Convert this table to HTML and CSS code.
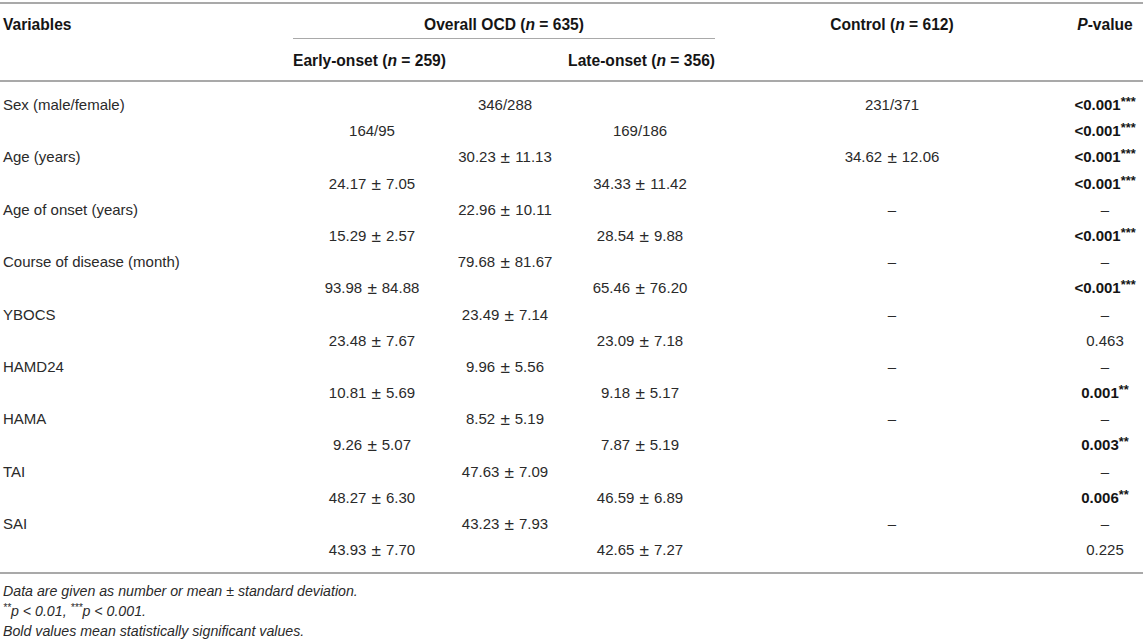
FILE: index.html
```html
<!DOCTYPE html>
<html lang="en">
<head>
<meta charset="utf-8">
<title>Table</title>
<link rel="stylesheet" href="styles.css">
</head>
<body>
<div class="page">
  <div class="head">
    <div class="h-var">Variables</div>
    <div class="h-overall">Overall OCD (<i>n</i> = 635)</div>
    <div class="h-control">Control (<i>n</i> = 612)</div>
    <div class="h-p"><i>P</i>-value</div>
    <div class="h-sub">
      <span>Early-onset (<i>n</i> = 259)</span>
      <span>Late-onset (<i>n</i> = 356)</span>
    </div>
  </div>

  <div class="body">
    <div class="c var">Sex (male/female)</div><div class="c"></div><div class="c">346/288</div><div class="c"></div><div class="c ctl">231/371</div><div class="c p"><b>&lt;0.001<sup>***</sup></b></div>
    <div class="c var"></div><div class="c">164/95</div><div class="c"></div><div class="c">169/186</div><div class="c ctl"></div><div class="c p"><b>&lt;0.001<sup>***</sup></b></div>

    <div class="c var">Age (years)</div><div class="c"></div><div class="c">30.23 <span class="pm">±</span> 11.13</div><div class="c"></div><div class="c ctl">34.62 <span class="pm">±</span> 12.06</div><div class="c p"><b>&lt;0.001<sup>***</sup></b></div>
    <div class="c var"></div><div class="c">24.17 <span class="pm">±</span> 7.05</div><div class="c"></div><div class="c">34.33 <span class="pm">±</span> 11.42</div><div class="c ctl"></div><div class="c p"><b>&lt;0.001<sup>***</sup></b></div>

    <div class="c var">Age of onset (years)</div><div class="c"></div><div class="c">22.96 <span class="pm">±</span> 10.11</div><div class="c"></div><div class="c ctl">–</div><div class="c p">–</div>
    <div class="c var"></div><div class="c">15.29 <span class="pm">±</span> 2.57</div><div class="c"></div><div class="c">28.54 <span class="pm">±</span> 9.88</div><div class="c ctl"></div><div class="c p"><b>&lt;0.001<sup>***</sup></b></div>

    <div class="c var">Course of disease (month)</div><div class="c"></div><div class="c">79.68 <span class="pm">±</span> 81.67</div><div class="c"></div><div class="c ctl">–</div><div class="c p">–</div>
    <div class="c var"></div><div class="c">93.98 <span class="pm">±</span> 84.88</div><div class="c"></div><div class="c">65.46 <span class="pm">±</span> 76.20</div><div class="c ctl"></div><div class="c p"><b>&lt;0.001<sup>***</sup></b></div>

    <div class="c var">YBOCS</div><div class="c"></div><div class="c">23.49 <span class="pm">±</span> 7.14</div><div class="c"></div><div class="c ctl">–</div><div class="c p">–</div>
    <div class="c var"></div><div class="c">23.48 <span class="pm">±</span> 7.67</div><div class="c"></div><div class="c">23.09 <span class="pm">±</span> 7.18</div><div class="c ctl"></div><div class="c p">0.463</div>

    <div class="c var">HAMD24</div><div class="c"></div><div class="c">9.96 <span class="pm">±</span> 5.56</div><div class="c"></div><div class="c ctl">–</div><div class="c p">–</div>
    <div class="c var"></div><div class="c">10.81 <span class="pm">±</span> 5.69</div><div class="c"></div><div class="c">9.18 <span class="pm">±</span> 5.17</div><div class="c ctl"></div><div class="c p"><b>0.001<sup>**</sup></b></div>

    <div class="c var">HAMA</div><div class="c"></div><div class="c">8.52 <span class="pm">±</span> 5.19</div><div class="c"></div><div class="c ctl">–</div><div class="c p">–</div>
    <div class="c var"></div><div class="c">9.26 <span class="pm">±</span> 5.07</div><div class="c"></div><div class="c">7.87 <span class="pm">±</span> 5.19</div><div class="c ctl"></div><div class="c p"><b>0.003<sup>**</sup></b></div>

    <div class="c var">TAI</div><div class="c"></div><div class="c">47.63 <span class="pm">±</span> 7.09</div><div class="c"></div><div class="c ctl"></div><div class="c p">–</div>
    <div class="c var"></div><div class="c">48.27 <span class="pm">±</span> 6.30</div><div class="c"></div><div class="c">46.59 <span class="pm">±</span> 6.89</div><div class="c ctl"></div><div class="c p"><b>0.006<sup>**</sup></b></div>

    <div class="c var">SAI</div><div class="c"></div><div class="c">43.23 <span class="pm">±</span> 7.93</div><div class="c"></div><div class="c ctl">–</div><div class="c p">–</div>
    <div class="c var"></div><div class="c">43.93 <span class="pm">±</span> 7.70</div><div class="c"></div><div class="c">42.65 <span class="pm">±</span> 7.27</div><div class="c ctl"></div><div class="c p">0.225</div>
  </div>

  <div class="notes">
    <p>Data are given as number or mean ± standard deviation.</p>
    <p><sup>**</sup>p &lt; 0.01, <sup>***</sup>p &lt; 0.001.</p>
    <p>Bold values mean statistically significant values.</p>
  </div>
</div>
</body>
</html>
```

FILE: styles.css
```css
html, body {
  margin: 0;
  padding: 0;
  background: #ffffff;
}

.page {
  width: 1143px;
  padding-top: 2px;
  font-family: "Liberation Sans", Arial, Helvetica, sans-serif;
  color: #2a2a2a;
}

.head {
  display: grid;
  grid-template-columns: 293px 422px 352px 76px;
  grid-template-rows: 35px 41px;
  border-top: 2px solid #a9a9a9;
  border-bottom: 2px solid #a9a9a9;
  font-weight: bold;
  font-size: 15.6px;
  line-height: 18px;
  color: #151515;
}

.h-var,
.h-overall,
.h-control,
.h-p {
  padding-top: 12px;
}

.h-var {
  padding-left: 3px;
}

.h-overall {
  text-align: center;
  border-bottom: 1px solid #a9a9a9;
}

.h-control {
  text-align: center;
  padding-left: 2px;
}

.h-p {
  text-align: center;
}

.h-sub {
  grid-column: 2;
  grid-row: 2;
  display: flex;
  justify-content: space-between;
  padding-top: 13px;
}

.body {
  display: grid;
  grid-template-columns: 303px 138px 128px 142px 356px 76px;
  grid-auto-rows: 26.2px;
  padding: 10px 0 9px;
  border-bottom: 2px solid #a9a9a9;
  font-size: 15px;
  line-height: 26.2px;
}

.c {
  text-align: center;
  white-space: nowrap;
}

.c.var {
  text-align: left;
  padding-left: 3px;
}

.c.ctl {
  padding-left: 6px;
}

.pm {
  display: inline-block;
  margin: 0 1.5px;
  transform: scale(1.15);
}

.c b {
  color: #151515;
}

.c sup {
  font-size: 0.85em;
  line-height: 0;
  vertical-align: 0.3em;
}

.notes {
  padding-top: 7px;
  font-size: 14.2px;
  font-style: italic;
  line-height: 20px;
  color: #2a2a2a;
}

.notes p {
  margin: 0;
  padding-left: 3px;
}

.notes sup {
  font-size: 0.72em;
  line-height: 0;
  vertical-align: 0.45em;
}
```
